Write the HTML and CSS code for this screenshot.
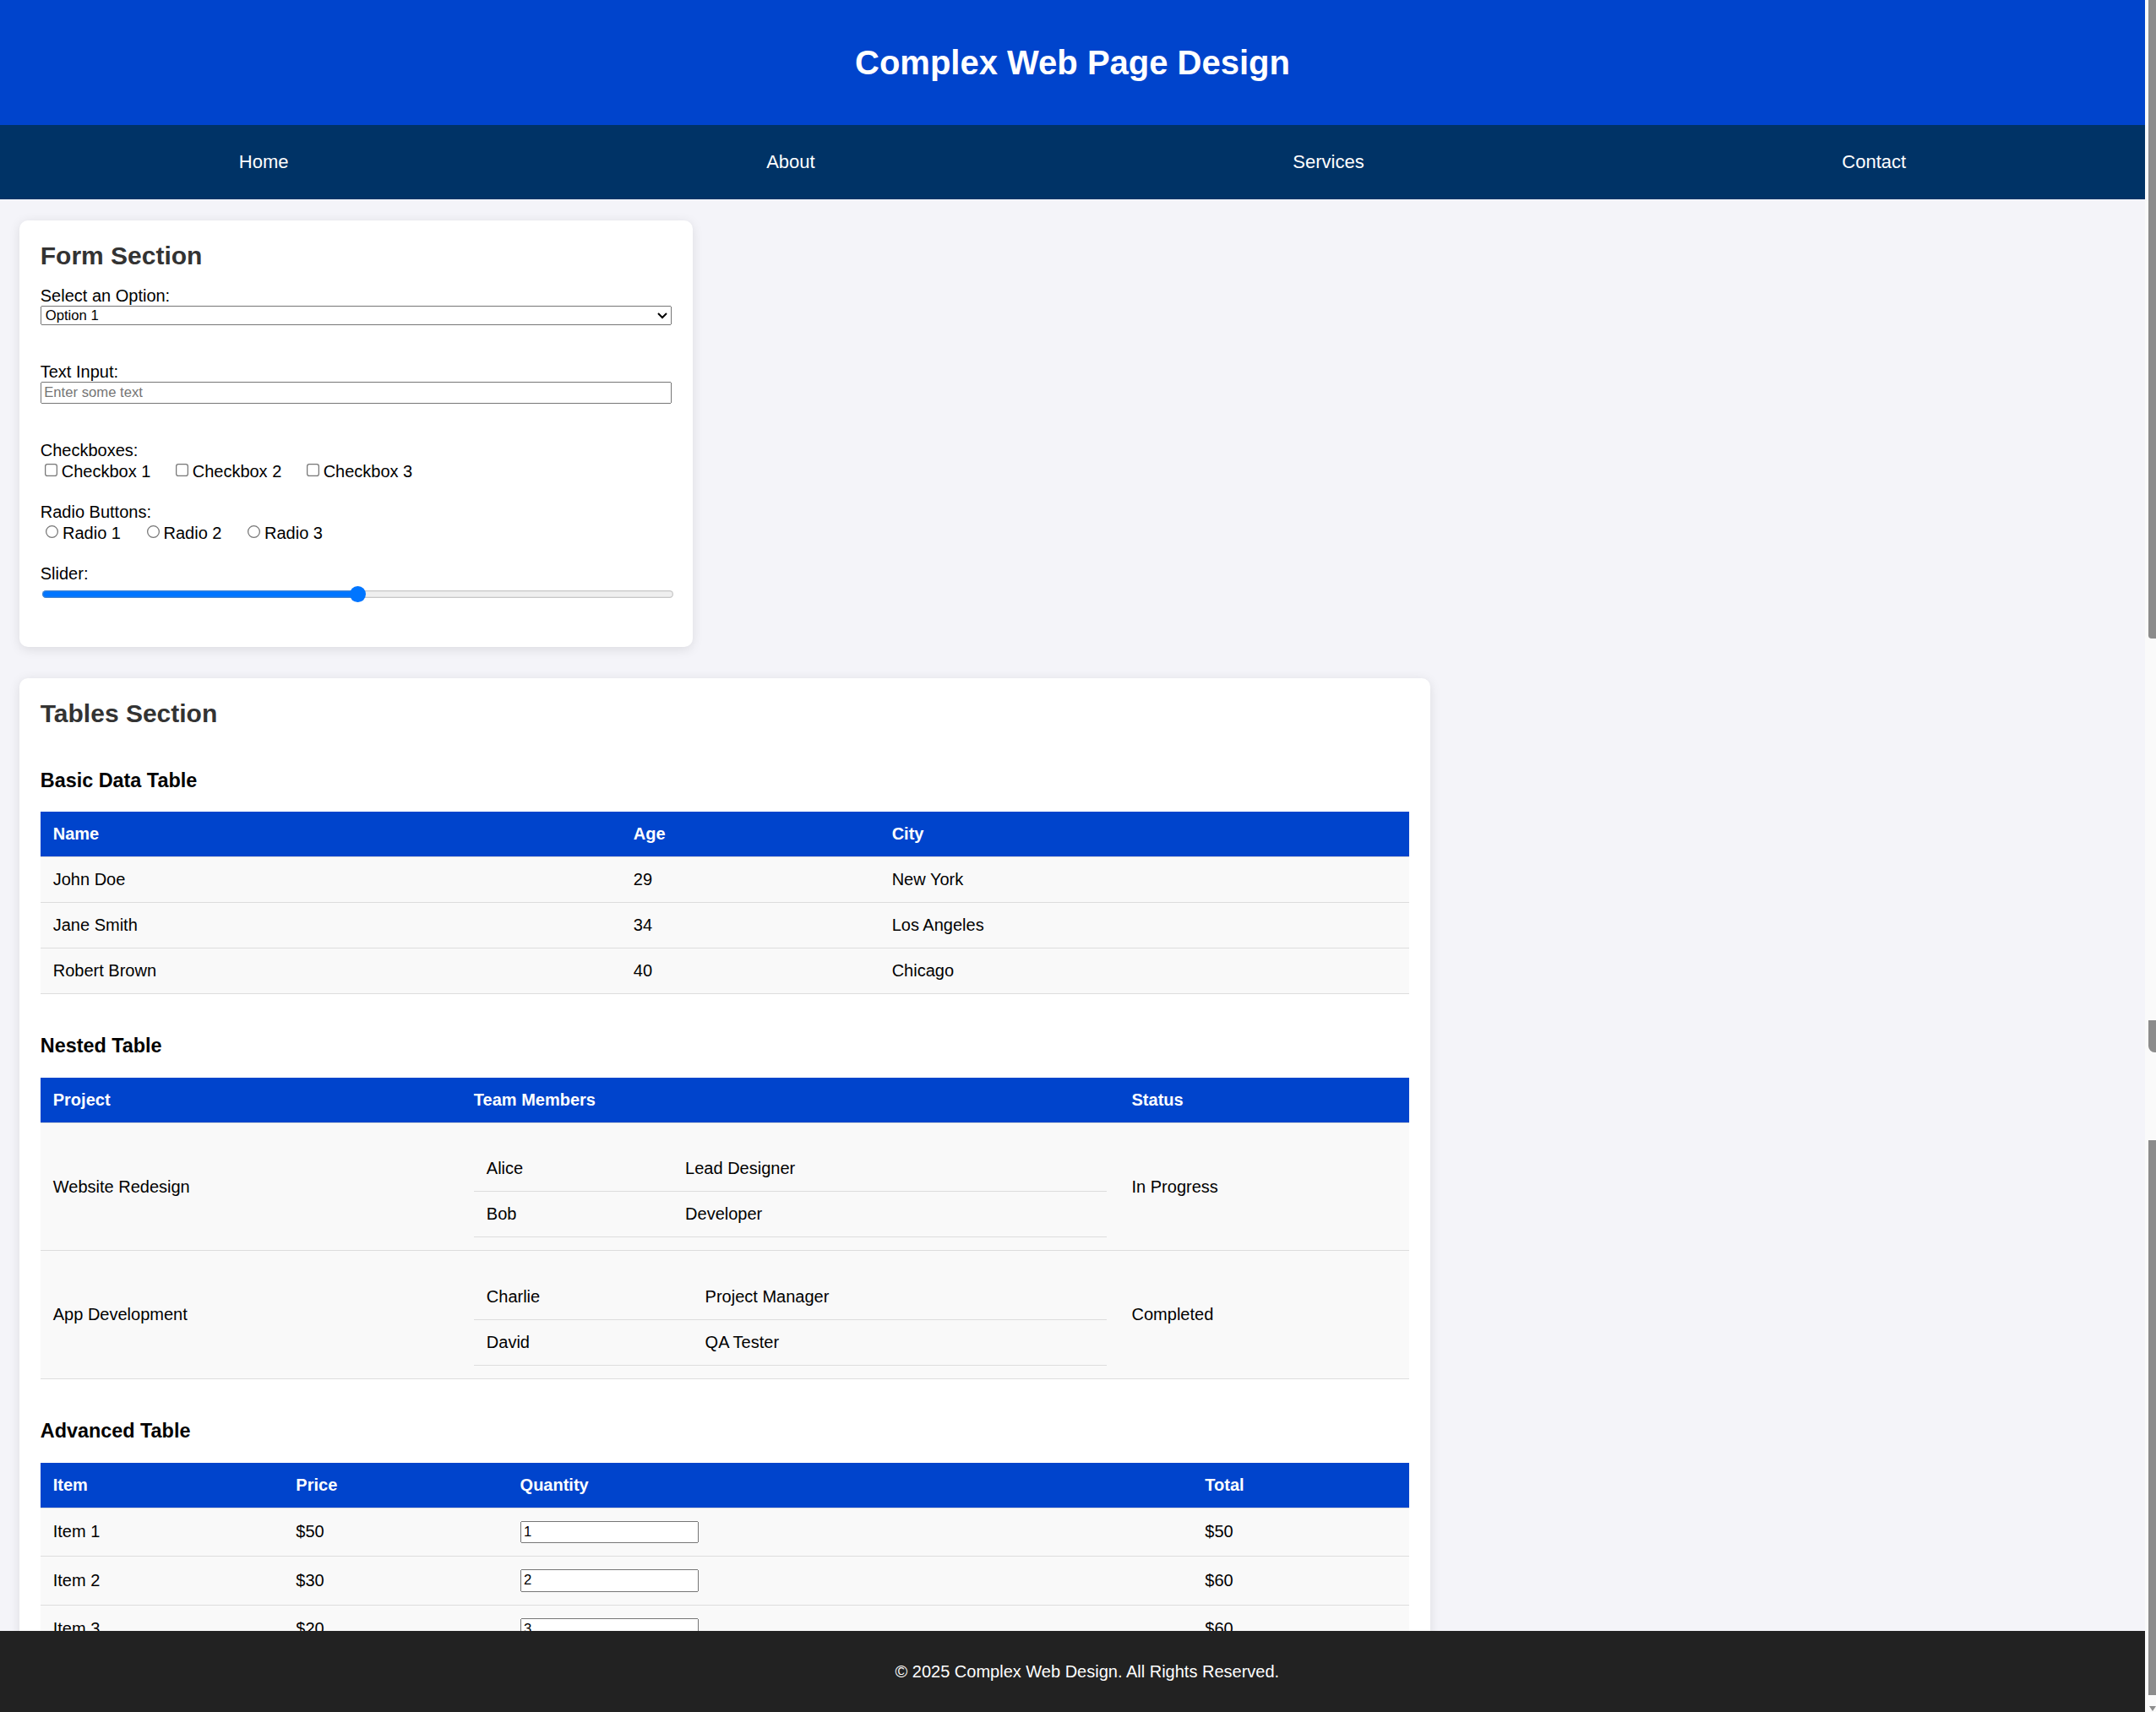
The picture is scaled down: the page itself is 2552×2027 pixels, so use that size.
FILE: index.html
```html
<!DOCTYPE html>
<html lang="en">
<head>
<meta charset="UTF-8">
<title>Complex Web Page Design</title>
<link rel="stylesheet" href="styles.css">
</head>
<body>
<header class="site-header">
  <h1>Complex Web Page Design</h1>
</header>
<nav class="site-nav">
  <ul>
    <li><a href="#">Home</a></li>
    <li><a href="#">About</a></li>
    <li><a href="#">Services</a></li>
    <li><a href="#">Contact</a></li>
  </ul>
</nav>
<main class="content">
  <section class="card form-card">
    <h2>Form Section</h2>
    <div class="form-group">
      <label class="group-label" for="sel">Select an Option:</label>
      <select id="sel" class="field">
        <option>Option 1</option>
        <option>Option 2</option>
        <option>Option 3</option>
      </select>
    </div>
    <div class="form-group">
      <label class="group-label" for="txt">Text Input:</label>
      <input id="txt" class="field" type="text" placeholder="Enter some text">
    </div>
    <div class="form-group">
      <label class="group-label">Checkboxes:</label>
      <label class="option"><input type="checkbox">Checkbox 1</label>
      <label class="option"><input type="checkbox">Checkbox 2</label>
      <label class="option"><input type="checkbox">Checkbox 3</label>
    </div>
    <div class="form-group">
      <label class="group-label">Radio Buttons:</label>
      <label class="option"><input type="radio" name="r">Radio 1</label>
      <label class="option"><input type="radio" name="r">Radio 2</label>
      <label class="option"><input type="radio" name="r">Radio 3</label>
    </div>
    <div class="form-group">
      <label class="group-label" for="rng">Slider:</label>
      <input id="rng" class="slider" type="range" min="0" max="100" value="50">
    </div>
  </section>

  <section class="card tables-card">
    <h2>Tables Section</h2>
    <div class="table-container">
      <h3>Basic Data Table</h3>
      <table>
        <thead>
          <tr><th>Name</th><th>Age</th><th>City</th></tr>
        </thead>
        <tbody>
          <tr><td>John Doe</td><td>29</td><td>New York</td></tr>
          <tr><td>Jane Smith</td><td>34</td><td>Los Angeles</td></tr>
          <tr><td>Robert Brown</td><td>40</td><td>Chicago</td></tr>
        </tbody>
      </table>
    </div>
    <div class="table-container">
      <h3>Nested Table</h3>
      <table>
        <thead>
          <tr><th>Project</th><th>Team Members</th><th>Status</th></tr>
        </thead>
        <tbody>
          <tr>
            <td>Website Redesign</td>
            <td>
              <table>
                <tr><td>Alice</td><td>Lead Designer</td></tr>
                <tr><td>Bob</td><td>Developer</td></tr>
              </table>
            </td>
            <td>In Progress</td>
          </tr>
          <tr>
            <td>App Development</td>
            <td>
              <table>
                <tr><td>Charlie</td><td>Project Manager</td></tr>
                <tr><td>David</td><td>QA Tester</td></tr>
              </table>
            </td>
            <td>Completed</td>
          </tr>
        </tbody>
      </table>
    </div>
    <div class="table-container">
      <h3>Advanced Table</h3>
      <table>
        <thead>
          <tr><th>Item</th><th>Price</th><th>Quantity</th><th>Total</th></tr>
        </thead>
        <tbody>
          <tr><td>Item 1</td><td>$50</td><td><input class="qty" type="number" value="1"></td><td>$50</td></tr>
          <tr><td>Item 2</td><td>$30</td><td><input class="qty" type="number" value="2"></td><td>$60</td></tr>
          <tr><td>Item 3</td><td>$20</td><td><input class="qty" type="number" value="3"></td><td>$60</td></tr>
        </tbody>
      </table>
    </div>
  </section>
</main>
<footer class="site-footer">
  <p>&copy; 2025 Complex Web Design. All Rights Reserved.</p>
</footer>
<div class="scrollbar" aria-hidden="true">
  <div class="sb-piece sb-thumb"></div>
  <div class="sb-piece sb-mid"></div>
  <div class="sb-piece sb-low"></div>
  <div class="sb-arrow"></div>
</div>
</body>
</html>
```

FILE: styles.css
```css
html {
  zoom: 1.25;
}

* {
  box-sizing: border-box;
}

body {
  margin: 0 10.4px 0 0;
  font-family: "Liberation Sans", Arial, sans-serif;
  background: #f4f4f9;
  color: #000;
}

.site-header {
  background: #0044cc;
  color: #fff;
  text-align: center;
  padding: 20px;
}

.site-header h1 {
  margin: 20px 0;
  font-size: 32px;
  line-height: 38.4px;
}

.site-nav {
  background: #003366;
}

.site-nav ul {
  list-style: none;
  margin: 0;
  padding: 0;
  display: flex;
  justify-content: space-around;
}

.site-nav a {
  display: block;
  color: #fff;
  text-decoration: none;
  font-size: 17.6px;
  line-height: 20.2px;
  padding: 25.1px 0;
}

.content {
  padding: 20px 18.2px 140px;
}

.card {
  background: #fff;
  padding: 20px;
  border-radius: 8px;
  box-shadow: 0 2px 10px rgba(0, 0, 0, 0.1);
  margin-bottom: 30px;
}

.form-card {
  width: 637.6px;
}

.tables-card {
  width: 1336px;
}

.card h2 {
  margin: 0 0 15px;
  font-size: 24px;
  color: #333;
}

.form-group {
  display: flow-root;
  margin-bottom: 20px;
}

.group-label {
  display: block;
}

.field {
  display: block;
  width: 100%;
  margin-bottom: 15px;
}

.option {
  margin-right: 15px;
}

.slider {
  -webkit-appearance: none;
  appearance: none;
  display: block;
  width: 100%;
  height: 16px;
  margin: 2px;
  background: transparent;
}

.slider::-webkit-slider-runnable-track {
  height: 7.4px;
  border-radius: 4px;
  background: linear-gradient(to right, #0075ff 50%, #efefef 50%);
  box-shadow: inset 0 0 0 1px rgba(150, 150, 150, 0.45);
}

.slider::-webkit-slider-thumb {
  -webkit-appearance: none;
  appearance: none;
  width: 15px;
  height: 15.5px;
  margin-top: -4.05px;
  border-radius: 50%;
  background: #0075ff;
  border: none;
}

.table-container {
  margin: 20px 0;
  overflow-x: auto;
}

table {
  width: 100%;
  border-collapse: collapse;
  margin-top: 10px;
}

th,
td {
  padding: 12px;
  text-align: left;
  border-bottom: 1px solid #ddd;
}

th {
  background: #0044cc;
  color: #fff;
}

td {
  background: #f9f9f9;
}

.qty {
  width: 169px;
}

.site-footer {
  position: fixed;
  left: 0;
  right: 10.4px;
  bottom: 0;
  background: #222;
  color: #fff;
  text-align: center;
  padding: 29.8px 0 28.6px 27.7px;
}

.site-footer p {
  margin: 0;
}

.scrollbar {
  position: fixed;
  top: 0;
  right: 0;
  bottom: 0;
  width: 10.4px;
  background: #fafafa;
  display: flex;
  flex-direction: column;
  align-items: flex-end;
}

.sb-piece {
  width: 7.2px;
  background: #8c8c8c;
}

.sb-thumb {
  height: 604.8px;
  border-radius: 0 0 0 3px;
}

.sb-mid {
  height: 30.4px;
  margin-top: 361.6px;
  border-radius: 0 0 0 6px;
}

.sb-low {
  height: 525.6px;
  margin-top: 83.2px;
}

.sb-arrow {
  margin-top: auto;
  width: 0;
  height: 0;
  border-left: 3.6px solid transparent;
  border-right: 3.6px solid transparent;
  border-top: 5px solid #8c8c8c;
  margin-bottom: 1px;
}
```
